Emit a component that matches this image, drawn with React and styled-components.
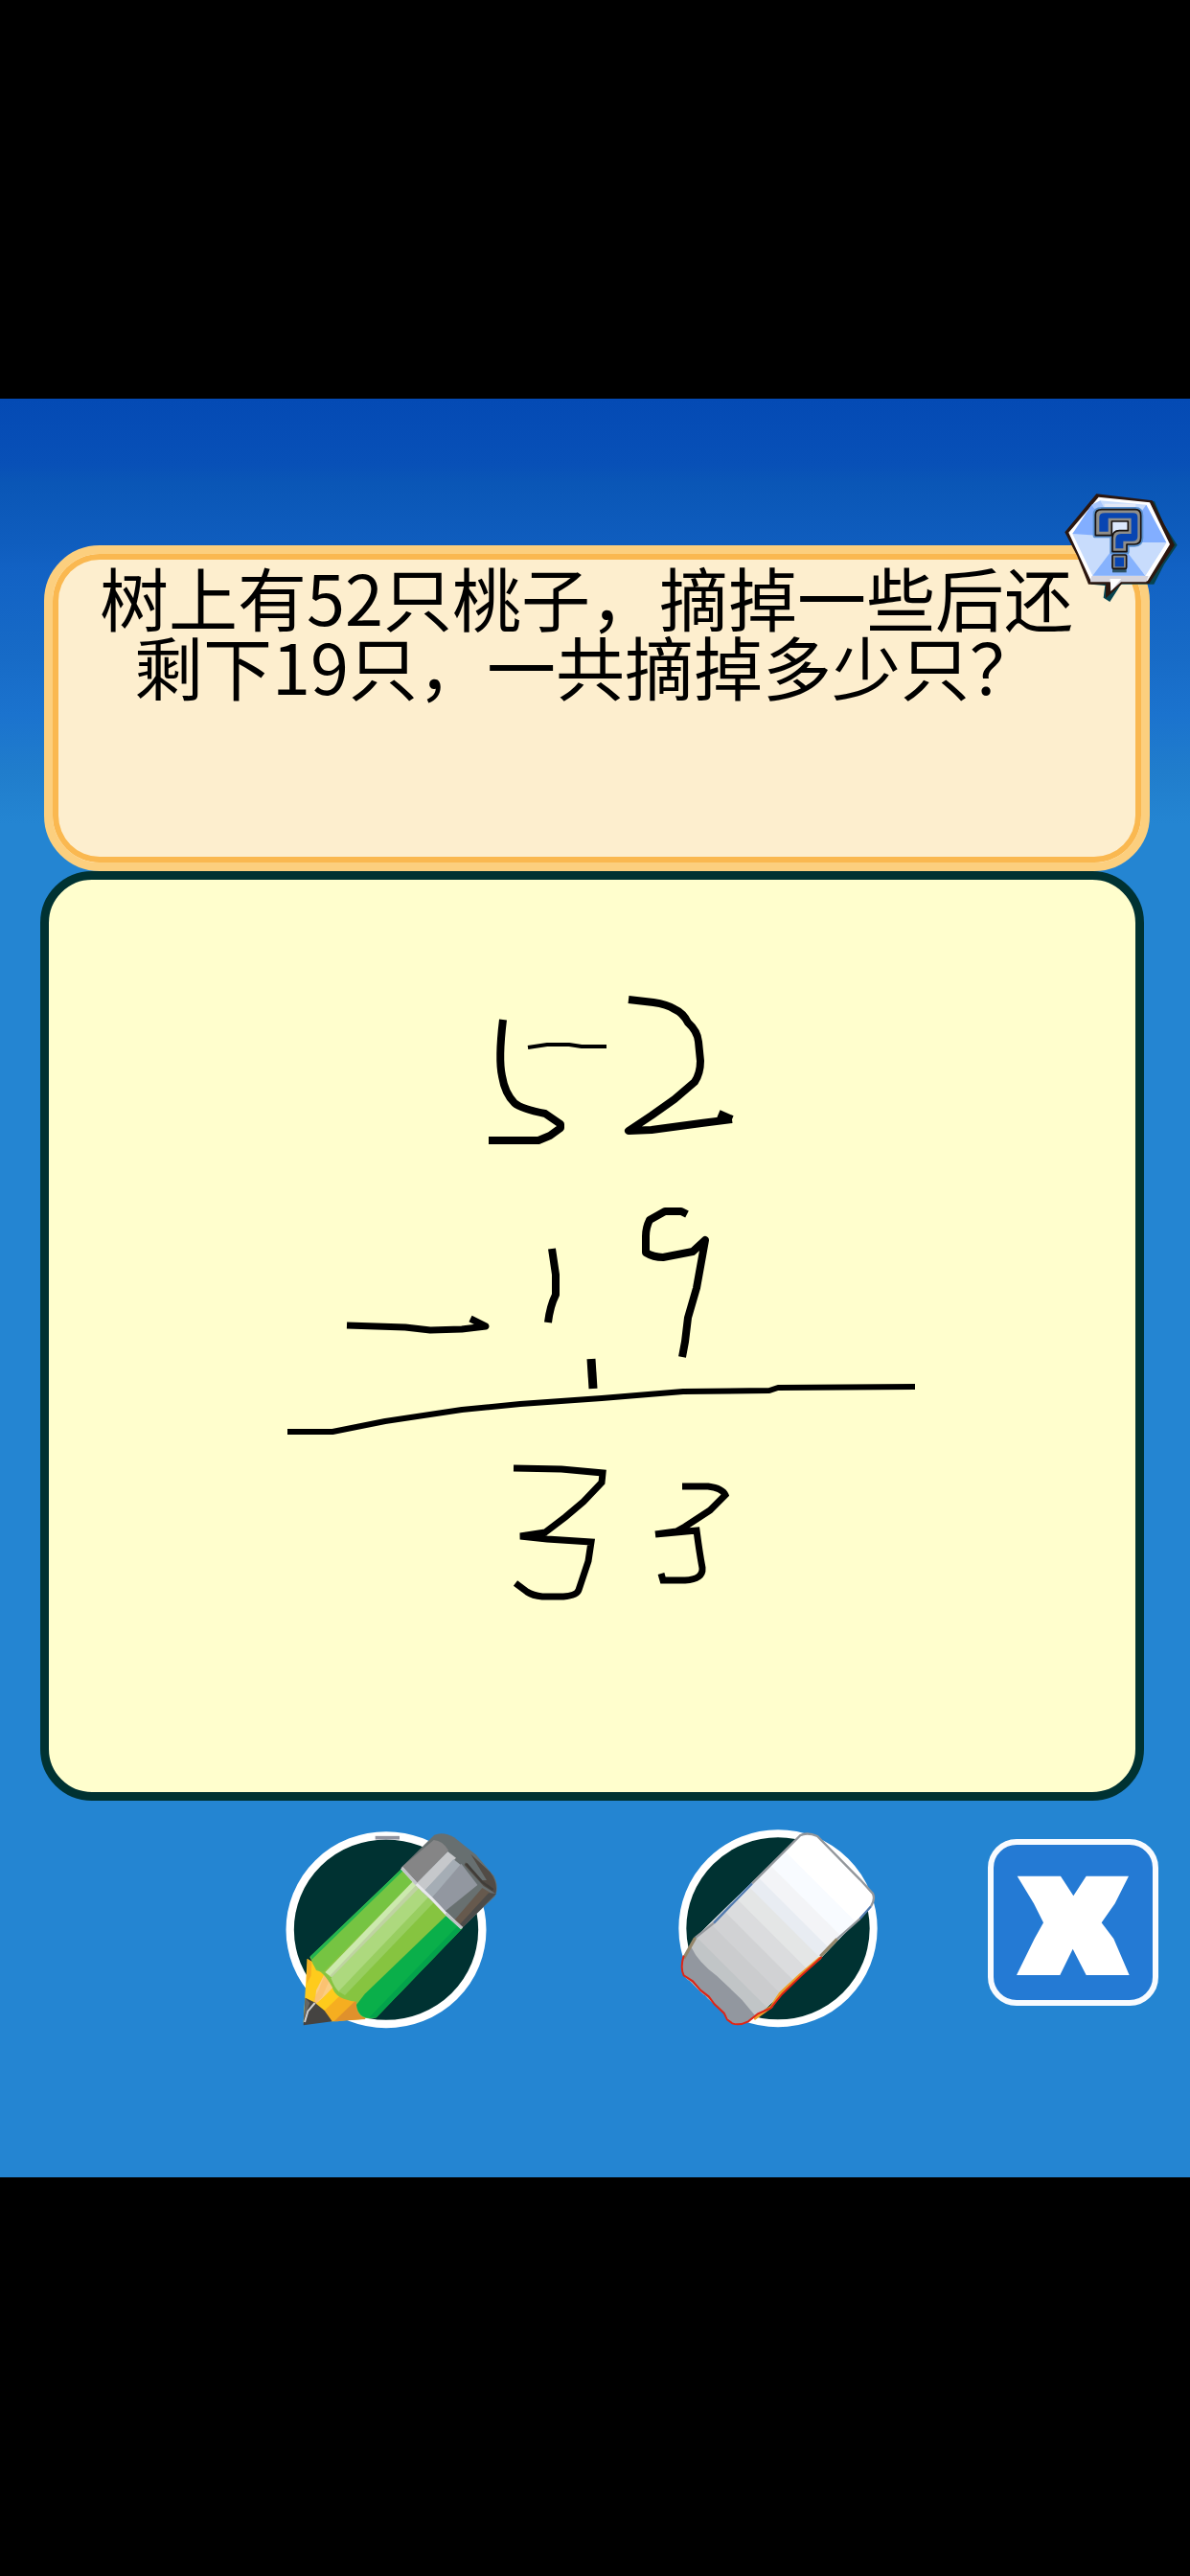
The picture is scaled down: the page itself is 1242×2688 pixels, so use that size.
import React from "react";
import styled, { createGlobalStyle } from "styled-components";

const GlobalStyle = createGlobalStyle`
  * { box-sizing: border-box; }
  body {
    margin: 0;
    background: #000;
    font-family: "Noto Sans CJK SC", sans-serif;
  }
`;

const Page = styled.div`
  min-height: 100vh;
  display: flex;
  flex-direction: column;
  justify-content: center;
  background: #000;
`;

const Stage = styled.main`
  display: flex;
  flex-direction: column;
  padding: 153px 0 155px;
  background: #2485d2 linear-gradient(
    #044ab4 0, #0850b7 68px, #0a56b6 88px, #0f5dbe 150px, #1262c4 180px,
    #176bc7 270px, #1b73ce 330px, #207dcc 390px, #2485d2 444px
  ) no-repeat;
`;

const Question = styled.section`
  position: relative;
  min-height: 340px;
  margin: 0 42px 0 46px;
  padding: 8px 62px 8px 40px;
  border: 9px solid #fccf7e;
  border-radius: 58px;
  background: #fdeece;
  box-shadow: inset 0 0 0 6px #fab850;
`;

const QuestionText = styled.p`
  margin: 0;
  font-size: 72px;
  line-height: 72px;
  font-weight: 400;
  text-align: center;
  color: #000;
`;

const HelpButton = styled.button`
  position: absolute;
  top: -65px;
  right: -39px;
  width: 120px;
  height: 117px;
  padding: 0;
  border: 0;
  background: none;
`;

const Board = styled.section`
  margin: 0 48px 0 42px;
  border: 9px solid #003232;
  border-radius: 54px;
  background: #fffecd;
`;

const Drawing = styled.svg`
  display: block;
  width: 100%;
  height: auto;
  overflow: visible;
`;

const Toolbar = styled.nav`
  display: grid;
  grid-template-columns: 298fr 210px 199fr 210px 114fr 178px 33fr;
  align-items: start;
  padding-top: 32px;
`;

const ToolButton = styled.button`
  grid-column: ${(p) => p.$column};
  padding: 0;
  border: 0;
  border-radius: 50%;
  background: none;
`;

const CloseButton = styled.button`
  grid-column: 6;
  display: grid;
  place-items: center;
  height: 174px;
  margin-top: 8px;
  padding: 6px 0 0;
  border: 6px solid #f8fbff;
  border-radius: 30px;
  background: #247ad4;
`;

const CloseMark = styled.svg`
  width: 118px;
  height: 106px;
`;

function HelpIcon() {
  const hook =
    "M160 207V142Q160 126 180 126H285Q302 126 302 145V215Q302 235 282 235H258V258H213V215Q213 192 235 192H262V163H211V207Z";
  return (
    <Drawing viewBox="60 70 360 351" aria-hidden="true">
      <path d="M172 82L345 101L373 170L416 237L375 298L343 360H240L205 415L185 402L190 364L146 360L88 222L70 192Z" fill="#06434f" />
      <path d="M163 77L338 98L408 237L328 358H244L192 404V360H138L102 270L64 197Z" fill="#2b160f" />
      <path d="M170 87L330 104L393 235L323 350H241L208 381V350H146L76 198Z" fill="#fff" />
      <path d="M148 334H326L319 353H240L208 381V353H144Z" fill="#d6d4dc" />
      <path d="M205 343H241L210 378Z" fill="#fff" />
      <path d="M175 98L319 111L382 230L316 333H151L88 202Z" fill="#c8dcfc" />
      <path d="M88 202L148 111L235 212Z" fill="#82aeff" />
      <path d="M148 111L175 98L235 212Z" fill="#a9c7fd" />
      <path d="M319 111L382 230L235 228Z" fill="#82aeff" />
      <path d="M235 222L151 333H316Z" fill="#86b2fd" />
      <path d="M382 230L316 333L235 228Z" fill="#c8dcfc" />
      <path d="M188 108H286V125H188Z" fill="#e5eaf7" />
      <path d={hook} fill="none" stroke="#5b91cf" strokeWidth="16" strokeLinejoin="round" />
      <path d="M211 163H262V192H235Q213 192 213 215Z" fill="#dce8fd" />
      <path d={hook} fill="#8f8e8a" stroke="#17110f" strokeWidth="5" strokeLinejoin="round" />
      <path
        d="M172 195V150Q172 137 190 137H278Q292 137 292 150V210Q292 225 275 225H247V248H223V220Q223 202 240 202H272V153H200V195Z"
        fill="#0845b2"
      />
      <rect x="213" y="268" width="44" height="55" fill="#2d5367" />
      <rect x="213" y="268" width="44" height="43" rx="4" fill="#8a8984" stroke="#17110f" strokeWidth="5" />
      <rect x="221" y="276" width="28" height="29" fill="#0845b2" />
    </Drawing>
  );
}

function Working() {
  return (
    <Drawing viewBox="51 918 1134 952" role="img" aria-label="52 − 19 = 33">
      <g fill="none" stroke="#000" strokeWidth="8" strokeLinejoin="round">
        <path d="M525 1064Q520 1105 524 1123Q527 1141 537 1151Q544 1157 569 1162L585 1173V1177L574 1185L562 1190H510" />
        <path strokeWidth="4" d="M551 1093L571 1090H594L607 1092H633" />
        <path d="M656 1043L682 1046Q696 1048 704 1053Q713 1057 718 1067Q728 1076 729 1087L731 1107Q731 1120 725 1129L704 1147L680 1164L656 1180L680 1179L732 1172L764 1168" />
        <path d="M750 1162L764 1168" />
        <path d="M717 1267L711 1264H694L678 1273Q674 1281 674 1290V1307Q682 1312 692 1312L723 1306L736 1294L727 1344L718 1375L715 1400L712 1416" />
        <path d="M576 1303L580 1330V1351Q574 1363 572 1380" />
        <path strokeWidth="7" d="M362 1383L423 1385L449 1388L482 1387L507 1384L491 1376" />
        <path strokeWidth="9" d="M617 1418L619 1449" />
        <path strokeWidth="6" d="M300 1494H347L402 1483L482 1471L543 1465L628 1459L713 1452L803 1451L812 1448L955 1447" />
        <path strokeWidth="7" strokeLinejoin="miter" d="M536 1532L586 1533L629 1537L628 1547L609 1567L590 1583L569 1599L543 1603L571 1606L617 1609L614 1629L604 1659Q602 1665 588 1666H566Q556 1665 550 1661L538 1652" />
        <path strokeWidth="7" strokeLinejoin="miter" d="M712 1551H739Q754 1553 757 1560L741 1576L715 1593L706 1598L684 1601L727 1597Q730 1620 733 1636Q734 1648 715 1649H692L690 1642" />
      </g>
    </Drawing>
  );
}

function PencilIcon() {
  return (
    <Drawing viewBox="54 93 630 618" aria-hidden="true">
      <ellipse cx="369" cy="401" rx="301" ry="295" fill="#003232" stroke="#fff" strokeWidth="25" />
      <path d="M335 113H411" stroke="#9093a0" strokeWidth="11" />
      <path d="M122 492L110 692L304 680L268 580Z" fill="#fecb1c" />
      <path d="M122 492L136 500L134 545L120 570Z" fill="#f6ae20" />
      <path d="M180 532L214 578L145 636L150 590Z" fill="#fbcd83" />
      <path d="M180 532L196 548L168 612L145 636L142 618L158 590Z" fill="#fbb85f" opacity=".5" />
      <path d="M204 580L276 625L298 680L196 688L150 637Z" fill="#fecb1c" />
      <path d="M176 654L232 600L278 625L220 688H196Z" fill="#f6ae20" />
      <path d="M278 618L304 681L206 688Z" fill="#e0912c" />
      <path d="M116 614L144 628L176 654L200 688L110 700Z" fill="#454341" />
      <path d="M116 614L130 630L112 680Z" fill="#686764" />
      <path d="M146 630L124 656L114 690" fill="none" stroke="#cfcfcf" strokeWidth="6" />
      <path d="M418 210L608 396L338 676Q274 690 276 626Q210 620 200 580Q172 530 150 528L130 486Z" fill="#86c440" />
      <path d="M418 210L454 248L172 532Q142 528 134 490Z" fill="#76c442" />
      <path d="M418 210L422 216L136 494L132 484Z" fill="#21b450" />
      <path d="M454 248L478 264L196 548L178 534Z" fill="#cce9ae" />
      <path d="M466 258L480 266L204 552L192 546Z" fill="#bfd3a2" />
      <path d="M476 266L510 300L222 596Q208 584 196 552Z" fill="#add97e" />
      <path d="M506 294L524 310L240 606L220 594Z" fill="#98ce60" />
      <path d="M556 358L608 396L338 676Q282 686 276 636L302 602Z" fill="#0aaf4a" />
      <path d="M596 386L608 396L338 676H316Z" fill="#03a34b" />
      <path d="M416 206L520 104Q548 92 582 112L650 166L706 232Q724 268 710 296L606 396L508 306Z" fill="#676f70" />
      <path d="M416 206L518 120Q546 122 564 152L464 258Z" fill="#858586" />
      <path d="M562 156L588 176L484 286L462 258Z" fill="#c6c8cb" />
      <path d="M580 180L610 204L508 306L484 284Z" fill="#a5adb5" />
      <path d="M604 194L656 262L556 352L508 306Z" fill="#9297a0" />
      <path d="M656 260L674 272L574 370L550 346Z" fill="#687070" />
      <path d="M670 270L706 292L606 396L582 372Z" fill="#66594d" />
      <path d="M690 286L714 288L672 330L608 394L598 386Z" fill="#4c4b49" />
      <path d="M634 164L694 220Q720 254 712 288L674 264L614 198L618 190L670 246L684 246Z" fill="#514b45" />
      <path d="M620 194L670 252L704 276" fill="none" stroke="#403d39" strokeWidth="7" />
      <path d="M418 208L464 258L510 302L556 350L606 396" fill="none" stroke="#e8e8ec" strokeWidth="9" />
      <path d="M418 208L464 258M556 350L606 396" fill="none" stroke="#c2c4c8" strokeWidth="9" />
    </Drawing>
  );
}

function EraserIcon() {
  return (
    <Drawing viewBox="78 93 630 618" aria-hidden="true">
      <defs>
        <clipPath id="eraser-body">
          <path d="M134 426L462 106Q484 94 516 108L650 244L690 288Q698 306 684 328L530 486L346 654Q290 704 254 694Q238 684 224 662L98 544Q84 520 100 482Z" />
        </clipPath>
      </defs>
      <ellipse cx="393" cy="397" rx="299" ry="297" fill="#003232" stroke="#fff" strokeWidth="24" />
      <g clipPath="url(#eraser-body)">
        <rect x="80" y="90" width="640" height="620" fill="#fff" />
        <path d="M410 150L650 390L80 960L-160 720Z" fill="#f8fbff" />
        <path d="M370 200L610 440L40 1010L-200 770Z" fill="#f3f4f7" />
        <path d="M334 240L574 480L4 1050L-236 810Z" fill="#e8ecf2" />
        <path d="M306 270L546 510L-24 1080L-264 840Z" fill="#e4e6e6" />
        <path d="M260 300L500 540L-70 1110L-310 870Z" fill="#dbdcde" />
        <path d="M222 340L462 580L-108 1150L-348 910Z" fill="#d1d2d4" />
        <path d="M180 380L420 620L-150 1190L-390 950Z" fill="#cbccce" />
        <path d="M138 424L378 664L-192 1234L-432 994Z" fill="#c1c5c7" />
        <path d="M120 452Q140 500 202 546L280 620L330 680L250 710L70 540Z" fill="#92979f" />
      </g>
      <g fill="none" strokeWidth="7">
        <path d="M134 426L192 380M312 256L462 106Q484 94 516 108L650 244L690 288Q698 306 684 328M650 366L578 430" stroke="#93979c" />
        <path d="M192 380L312 256M684 328L650 366" stroke="#527baf" />
        <path d="M134 426L98 490M578 430L526 484" stroke="#94866a" strokeWidth="10" />
        <path d="M526 488L460 544L400 600L372 642L318 680" stroke="#eda02a" strokeWidth="9" />
        <path d="M530 486L464 546L406 602L370 646L330 664L300 688Q272 702 250 694L234 682L224 662L194 634L176 610L150 590L126 562L98 544Q86 520 98 482" stroke="#df2515" strokeWidth="6" />
      </g>
    </Drawing>
  );
}

export default function App() {
  return (
    <>
      <GlobalStyle />
      <Page>
        <Stage>
          <Question>
            <QuestionText>树上有52只桃子，摘掉一些后还剩下19只，一共摘掉多少只？</QuestionText>
            <HelpButton type="button" aria-label="帮助">
              <HelpIcon />
            </HelpButton>
          </Question>
          <Board>
            <Working />
          </Board>
          <Toolbar>
            <ToolButton type="button" $column={2} aria-label="铅笔">
              <PencilIcon />
            </ToolButton>
            <ToolButton type="button" $column={4} aria-label="橡皮">
              <EraserIcon />
            </ToolButton>
            <CloseButton type="button" aria-label="关闭">
              <CloseMark viewBox="180 350 354 316" aria-hidden="true">
                <path
                  d="M182 354H318L358 416L398 354H531L488 440L446 500L484 550L533 664H398L356 582L316 664H180L236 550L264 500L234 440Z"
                  fill="#fff"
                />
              </CloseMark>
            </CloseButton>
          </Toolbar>
        </Stage>
      </Page>
    </>
  );
}
